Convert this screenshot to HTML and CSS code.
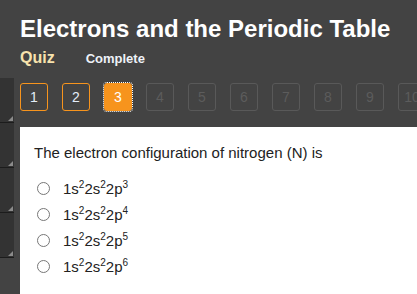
FILE: index.html
```html
<!DOCTYPE html>
<html>
<head>
<meta charset="utf-8">
<link rel="stylesheet" href="styles.css">
</head>
<body>
<header class="header">
  <h1 class="title">Electrons and the Periodic Table</h1>
  <div class="tabs">
    <span class="tab tab-quiz">Quiz</span>
    <span class="tab tab-complete">Complete</span>
  </div>
</header>
<div class="layout">
  <aside class="strip">
    <div class="panel"></div>
    <div class="panel"></div>
    <div class="panel"></div>
    <div class="panel"></div>
  </aside>
  <main class="main">
    <nav class="pager">
      <button class="page done">1</button>
      <button class="page done">2</button>
      <button class="page current">3</button>
      <button class="page">4</button>
      <button class="page">5</button>
      <button class="page">6</button>
      <button class="page">7</button>
      <button class="page">8</button>
      <button class="page">9</button>
      <button class="page">10</button>
    </nav>
    <section class="card">
      <p class="question">The electron configuration of nitrogen (N) is</p>
      <ul class="options">
        <li class="option"><input type="radio" name="q" class="radio"><span>1s<sup>2</sup>2s<sup>2</sup>2p<sup>3</sup></span></li>
        <li class="option"><input type="radio" name="q" class="radio"><span>1s<sup>2</sup>2s<sup>2</sup>2p<sup>4</sup></span></li>
        <li class="option"><input type="radio" name="q" class="radio"><span>1s<sup>2</sup>2s<sup>2</sup>2p<sup>5</sup></span></li>
        <li class="option"><input type="radio" name="q" class="radio"><span>1s<sup>2</sup>2s<sup>2</sup>2p<sup>6</sup></span></li>
      </ul>
    </section>
  </main>
</div>
</body>
</html>
```

FILE: styles.css
```css
html, body {
  margin: 0;
  padding: 0;
  height: 100%;
  overflow: hidden;
}
body {
  background: #434343;
  font-family: "Liberation Sans", Arial, sans-serif;
  color: #222;
}
.header {
  height: 78px;
  box-sizing: border-box;
  padding: 15px 0 0 20px;
}
.title {
  margin: 0;
  font-size: 24px;
  line-height: 27px;
  font-weight: bold;
  color: #ffffff;
  white-space: nowrap;
}
.tabs {
  display: flex;
  align-items: baseline;
  gap: 31px;
  margin-top: 7px;
}
.tab {
  font-weight: bold;
}
.tab-quiz {
  font-size: 16px;
  color: #f7e2ad;
}
.tab-complete {
  font-size: 13px;
  color: #eef2f8;
}
.layout {
  display: flex;
  height: calc(100% - 78px);
}
.strip {
  width: 14px;
  flex: none;
}
.panel {
  position: relative;
  height: 44px;
  background: #333333;
  border-bottom: 1px solid #1c1c1c;
}
.panel::after {
  content: "";
  position: absolute;
  right: 1px;
  bottom: 1px;
  width: 0;
  height: 0;
  border-left: 5px solid transparent;
  border-bottom: 5px solid #8a8a8a;
}
.main {
  flex: 1;
  margin-left: 6px;
  padding-top: 5px;
  display: flex;
  flex-direction: column;
  min-width: 0;
}
.pager {
  display: flex;
  gap: 14px;
  height: 28px;
  margin-bottom: 16px;
  flex: none;
}
.page {
  flex: none;
  width: 28px;
  height: 28px;
  box-sizing: border-box;
  padding: 0;
  border: 1px solid #595959;
  border-radius: 3px;
  background: transparent;
  color: #5c5c5c;
  font-family: "Liberation Sans", Arial, sans-serif;
  font-size: 14px;
  line-height: 26px;
  text-align: center;
}
.page.done {
  border-color: #f7941d;
  color: #e3edf8;
}
.page.current {
  border-color: #f7941d;
  background: #f7941d;
  color: #ffffff;
  outline: 1px dotted #ffffff;
  outline-offset: 0;
}
.card {
  flex: 1;
  background: #ffffff;
  padding: 17px 14px 0 14px;
}
.question {
  margin: 0;
  font-size: 15px;
  line-height: 18px;
  color: #222222;
}
.options {
  list-style: none;
  margin: 13px 0 0 0;
  padding: 0;
}
.option {
  display: flex;
  align-items: center;
  height: 26px;
  font-size: 15px;
  color: #222222;
}
.radio {
  appearance: none;
  -webkit-appearance: none;
  margin: 0 13px 0 3px;
  width: 13px;
  height: 13px;
  box-sizing: border-box;
  border: 1px solid #777777;
  border-radius: 50%;
  background: #ffffff;
  flex: none;
}
sup {
  font-size: 10px;
  line-height: 0;
  vertical-align: 6px;
}
```
